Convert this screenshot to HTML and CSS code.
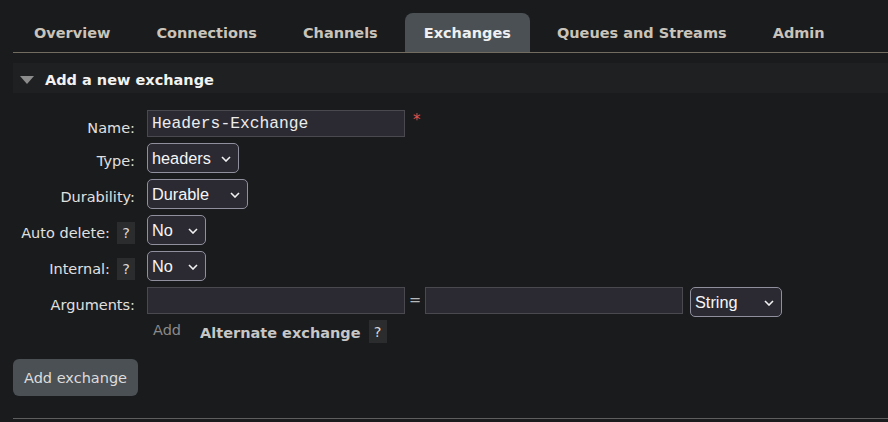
FILE: index.html
```html
<!DOCTYPE html>
<html lang="en">
<head>
<meta charset="utf-8">
<title>Exchanges</title>
<link rel="stylesheet" href="styles.css">
</head>
<body>
<div class="page">
  <ul class="tabs">
    <li class="tab">Overview</li>
    <li class="tab">Connections</li>
    <li class="tab">Channels</li>
    <li class="tab active">Exchanges</li>
    <li class="tab">Queues and Streams</li>
    <li class="tab">Admin</li>
  </ul>

  <div class="section-head">
    <svg class="tri" width="14" height="8" viewBox="0 0 14 8"><polygon points="0,0 14,0 7,8" fill="#8c8c8c"/></svg>
    <span>Add a new exchange</span>
  </div>

  <form class="form">
    <label class="lbl">Name:</label>
    <div class="ctl">
      <input class="txt" type="text" value="Headers-Exchange">
      <span class="req">*</span>
    </div>

    <label class="lbl">Type:</label>
    <div class="ctl">
      <span class="sel w-type"><select><option>headers</option></select><svg class="chev" width="10" height="6" viewBox="0 0 10 6"><polyline points="1,1 5,5 9,1" fill="none" stroke="#f0f0f0" stroke-width="1.6"/></svg></span>
    </div>

    <label class="lbl">Durability:</label>
    <div class="ctl">
      <span class="sel w-dur"><select><option>Durable</option></select><svg class="chev" width="10" height="6" viewBox="0 0 10 6"><polyline points="1,1 5,5 9,1" fill="none" stroke="#f0f0f0" stroke-width="1.6"/></svg></span>
    </div>

    <label class="lbl">Auto delete: <span class="help">?</span></label>
    <div class="ctl">
      <span class="sel w-no"><select><option>No</option></select><svg class="chev" width="10" height="6" viewBox="0 0 10 6"><polyline points="1,1 5,5 9,1" fill="none" stroke="#f0f0f0" stroke-width="1.6"/></svg></span>
    </div>

    <label class="lbl">Internal: <span class="help">?</span></label>
    <div class="ctl">
      <span class="sel w-no"><select><option>No</option></select><svg class="chev" width="10" height="6" viewBox="0 0 10 6"><polyline points="1,1 5,5 9,1" fill="none" stroke="#f0f0f0" stroke-width="1.6"/></svg></span>
    </div>

    <label class="lbl">Arguments:</label>
    <div class="ctl">
      <input class="txt" type="text" value="">
      <span class="eq">=</span>
      <input class="txt" type="text" value="">
      <span class="sel w-str"><select><option>String</option></select><svg class="chev" width="10" height="6" viewBox="0 0 10 6"><polyline points="1,1 5,5 9,1" fill="none" stroke="#f0f0f0" stroke-width="1.6"/></svg></span>
    </div>

    <span class="spacer"></span>
    <div class="ctl addrow">
      <span class="add">Add</span>
      <span class="alt">Alternate exchange</span>
      <span class="help">?</span>
    </div>
  </form>

  <button class="btn" type="button">Add exchange</button>
  <div class="bottom-rule"></div>
</div>
</body>
</html>
```

FILE: styles.css
```css
html, body {
  margin: 0;
  padding: 0;
  background: #1a1b1d;
}

body {
  font-family: "DejaVu Sans", Verdana, sans-serif;
  font-size: 14.5px;
  color: #e2e2e2;
}

.page {
  padding: 13px 0 0 13px;
}

.tabs {
  list-style: none;
  margin: 0;
  padding: 0 0 0 2px;
  display: flex;
  gap: 8px;
  border-bottom: 1px solid #726b5f;
}

.tab {
  height: 39px;
  line-height: 40px;
  padding: 0 19px;
  font-weight: bold;
  color: #c9c3b9;
  border-radius: 8px 8px 0 0;
}

.tab.active {
  background: #4b5055;
  color: #eef0f2;
}

.section-head {
  box-sizing: border-box;
  margin-top: 10px;
  height: 30px;
  padding: 3px 0 0 7px;
  background: #1f2022;
  display: flex;
  align-items: center;
  gap: 11px;
  font-weight: bold;
  color: #f2f2f2;
}

.tri {
  display: block;
}

.form {
  margin-top: 17px;
  display: grid;
  grid-template-columns: 122px auto;
  column-gap: 12px;
  row-gap: 6px;
  align-items: start;
}

.lbl {
  height: 18px;
  margin-top: 9px;
  display: flex;
  align-items: center;
  justify-content: flex-end;
  gap: 7px;
  color: #e0e0e0;
  white-space: nowrap;
}

.help {
  display: inline-flex;
  align-items: center;
  justify-content: center;
  flex: none;
  width: 18px;
  height: 22px;
  background: #2b2c2e;
  color: #d8d8d8;
  font-weight: normal;
}

.ctl {
  display: flex;
  align-items: flex-start;
}

.txt {
  box-sizing: border-box;
  width: 258px;
  height: 27px;
  margin: 0;
  padding: 0 4px;
  background: #2b2a33;
  border: 1px solid #4a4950;
  color: #ececec;
  font-family: "Liberation Mono", "Courier New", monospace;
  font-size: 16.3px;
  outline: none;
}

.req {
  margin-left: 8px;
  margin-top: 3px;
  color: #e0524f;
  font-size: 15px;
  line-height: 1;
}

.eq {
  width: 20px;
  text-align: center;
  color: #b8b8b8;
  line-height: 27px;
}

.sel {
  position: relative;
  display: inline-block;
  height: 30px;
}

.sel select {
  appearance: none;
  -webkit-appearance: none;
  box-sizing: border-box;
  width: 100%;
  height: 30px;
  margin: 0;
  padding: 0 0 0 4px;
  background: #2b2a33;
  border: 1px solid #8f8f9d;
  border-radius: 5px;
  color: #f6f6f6;
  font-family: "Liberation Sans", Arial, sans-serif;
  font-size: 16.3px;
  outline: none;
}

.chev {
  position: absolute;
  right: 8px;
  top: 13px;
  pointer-events: none;
}

.w-type { width: 92px; }
.w-dur { width: 101px; }
.w-no { width: 59px; }
.w-str { width: 92px; margin-left: 7px; }

.spacer {
  display: block;
}

.addrow {
  margin-top: -3px;
  align-items: center;
  padding-left: 6px;
}

.add {
  color: #8a8a8a;
  align-self: flex-start;
  margin-top: 2px;
}

.alt {
  margin-left: 19px;
  margin-right: 8px;
  font-weight: bold;
  color: #c6c6c6;
  margin-top: 3px;
}

.addrow .help {
  width: 18px;
  height: 23px;
}

.btn {
  display: block;
  margin-top: 16px;
  height: 37px;
  padding: 0 11px;
  background: #4b5055;
  color: #dcdcdc;
  border: none;
  border-radius: 6px;
  font-family: "DejaVu Sans", Verdana, sans-serif;
  font-size: 14.5px;
}

.bottom-rule {
  margin-top: 22px;
  border-top: 1px solid #5e5e5e;
}
```
